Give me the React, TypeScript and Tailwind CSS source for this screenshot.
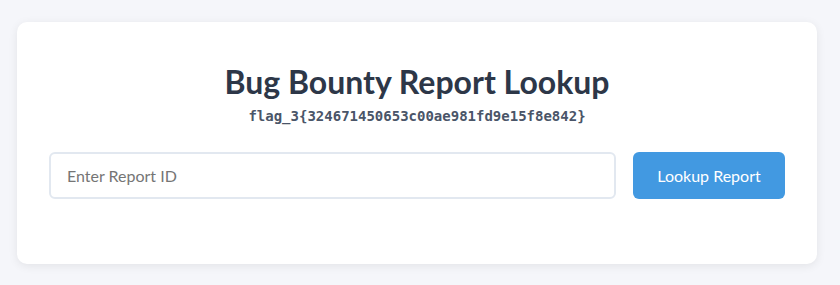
export default function App() {
  return (
    <div className="min-h-[285px] bg-[#f5f6fa] pt-[22px] font-['Lato','Open_Sans',sans-serif]">
      <div className="ml-[17px] w-[800px] rounded-[10px] bg-white px-8 pt-[40px] pb-[65px] shadow-[0_2px_10px_rgba(0,0,0,0.08)]">
        <h1 className="text-center text-[32px] leading-[40px] font-bold text-[#2d3748]">
          Bug Bounty Report Lookup
        </h1>
        <p className="mt-[4px] text-center font-['DejaVu_Sans_Mono',monospace] text-[14px] leading-[20px] font-bold text-[#4a5568]">
          flag_3{'{'}324671450653c00ae981fd9e15f8e842{'}'}
        </p>
        <div className="mt-[26px] flex gap-[17px]">
          <input
            type="text"
            placeholder="Enter Report ID"
            className="h-[47px] flex-1 rounded-[6px] border-2 border-[#e2e8f0] px-4 text-[16px] text-[#2d3748] outline-none placeholder:text-[#757575]"
          />
          <button className="h-[47px] w-[152px] rounded-[6px] bg-[#4299e1] text-[16px] text-white">
            Lookup Report
          </button>
        </div>
      </div>
    </div>
  );
}
